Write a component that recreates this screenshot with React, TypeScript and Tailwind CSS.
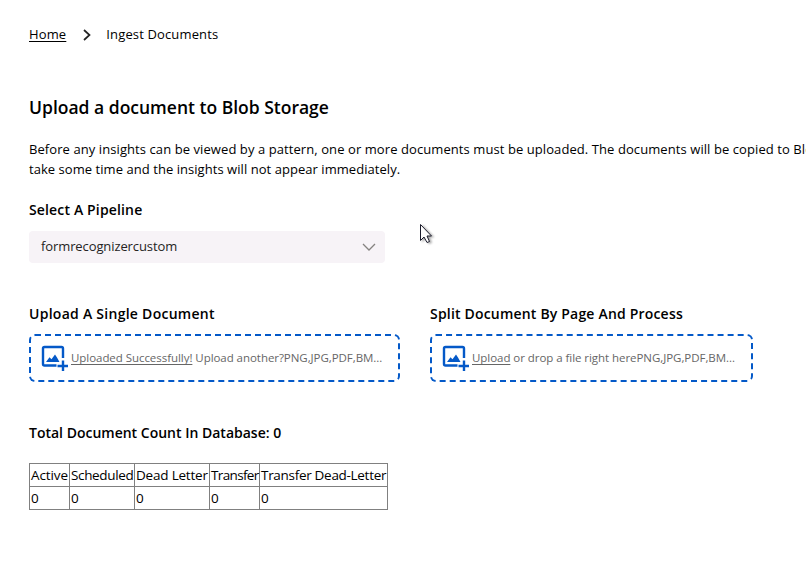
import React from "react";

function ImageAddIcon() {
  return (
    <svg width="28" height="28" viewBox="0 0 28 28" className="shrink-0" fill="none">
      <path d="M15.500 21.500H3.500A1.500 1.500 0 0 1 2 20V4.500A1.500 1.500 0 0 1 3.500 3H20.500A1.500 1.500 0 0 1 22 4.500V14" stroke="#0459c8" strokeWidth="2.400" />
      <path d="M5 18L8.500 13.300L10.500 15.300L14 10.500L16 13.500L18.500 18Z" fill="#0459c8" />
      <path d="M22 16.500V27M16.500 22H27" stroke="#0459c8" strokeWidth="2.400" />
    </svg>
  );
}

function DropZone({ width, action, hint }: { width: string; action: string; hint: string }) {
  return (
    <div className={`${width} mt-[10px] flex h-12 items-center rounded-md border-2 border-dashed border-[#0459c8] pl-[10px] text-[11.5px] tracking-[-0.05px] text-[#666666]`}>
      <ImageAddIcon />
      <span className="ml-[2px] whitespace-pre underline underline-offset-2">{action}</span>
      <span className="whitespace-pre">{hint}</span>
    </div>
  );
}

const columns = [
  { name: "Active", className: "w-[40px] tracking-[-0.1px]" },
  { name: "Scheduled", className: "w-[65px] tracking-[-0.35px]" },
  { name: "Dead Letter", className: "w-[75px] tracking-[-0.2px]" },
  { name: "Transfer", className: "w-[50px] tracking-[-0.65px]" },
  { name: "Transfer Dead-Letter", className: "w-[128px] tracking-[-0.3px]" },
];

export default function App() {
  return (
    <main className="relative h-[577px] w-[806px] overflow-hidden bg-white pl-[29px] font-['Open_Sans','Noto_Sans',sans-serif] text-[13px] text-black">
      <nav className="mt-[25px] flex h-5 items-center tracking-[0.14px]">
        <a className="underline underline-offset-2">Home</a>
        <svg width="8" height="12" viewBox="0 0 8 12" className="mr-[15px] ml-[17px]" fill="none">
          <path d="M1 1L6.500 6L1 11" stroke="#222" strokeWidth="1.700" />
        </svg>
        <span>Ingest Documents</span>
      </nav>
      <h1 className="mt-[50px] h-6 text-[17.5px] leading-6 font-semibold whitespace-nowrap">Upload a document to Blob Storage</h1>
      <p className="mt-5 h-10 leading-5 whitespace-nowrap">
        <span className="tracking-[0.08px]">Before any insights can be viewed by a pattern, one or more documents must be uploaded. The documents will be copied to Blob</span>
        <br />
        <span className="tracking-[0.05px]">take some time and the insights will not appear immediately.</span>
      </p>
      <h2 className="mt-[21px] h-5 text-[14px] leading-5 font-semibold tracking-[0.15px]">Select A Pipeline</h2>
      <div className="mt-[11px] flex h-8 w-[356px] items-center justify-between rounded bg-[#f7f3f7] pr-[9px] pl-3 text-[#252423]">
        <span className="tracking-[-0.1px]">formrecognizercustom</span>
        <svg width="14" height="8" viewBox="0 0 14 8" fill="none"><path d="M1 1L7 7L13 1" stroke="#858280" strokeWidth="1.300" /></svg>
      </div>
      <div className="mt-[41px] flex gap-[30px]">
        <section className="w-[371px]">
          <h2 className="h-5 text-[14px] leading-5 font-semibold tracking-[0.27px]">Upload A Single Document</h2>
          <DropZone width="w-[371px]" action="Uploaded Successfully!" hint=" Upload another?PNG,JPG,PDF,BM..." />
        </section>
        <section className="w-[323px]">
          <h2 className="h-5 text-[14px] leading-5 font-semibold tracking-[0.19px]">Split Document By Page And Process</h2>
          <DropZone width="w-[323px]" action="Upload" hint=" or drop a file right herePNG,JPG,PDF,BM..." />
        </section>
      </div>
      <h2 className="mt-[41px] h-5 text-[14px] leading-5 font-semibold">Total Document Count In Database: 0</h2>
      <table className="mt-5 w-[359px] table-fixed border-collapse text-[13.5px] leading-5">
        <tbody>
          <tr className="h-[23px]">
            {columns.map(({ name, className }) => (
              <td key={name} className={`${className} border border-[#808080] p-px whitespace-nowrap`}>{name}</td>
            ))}
          </tr>
          <tr className="h-[23px]">
            {columns.map(({ name }) => (
              <td key={name} className="border border-[#808080] p-px">0</td>
            ))}
          </tr>
        </tbody>
      </table>
      <svg width="18" height="24" viewBox="0 0 18 24" className="absolute top-[223px] left-[419px] drop-shadow-[2px_1px_1px_rgba(0,0,0,0.35)]">
        <path d="M1.500 1.500V17.500L5 14L8 19.500L10.500 18.500L8 13H12.500Z" fill="white" stroke="#1c1c2c" />
      </svg>
    </main>
  );
}
